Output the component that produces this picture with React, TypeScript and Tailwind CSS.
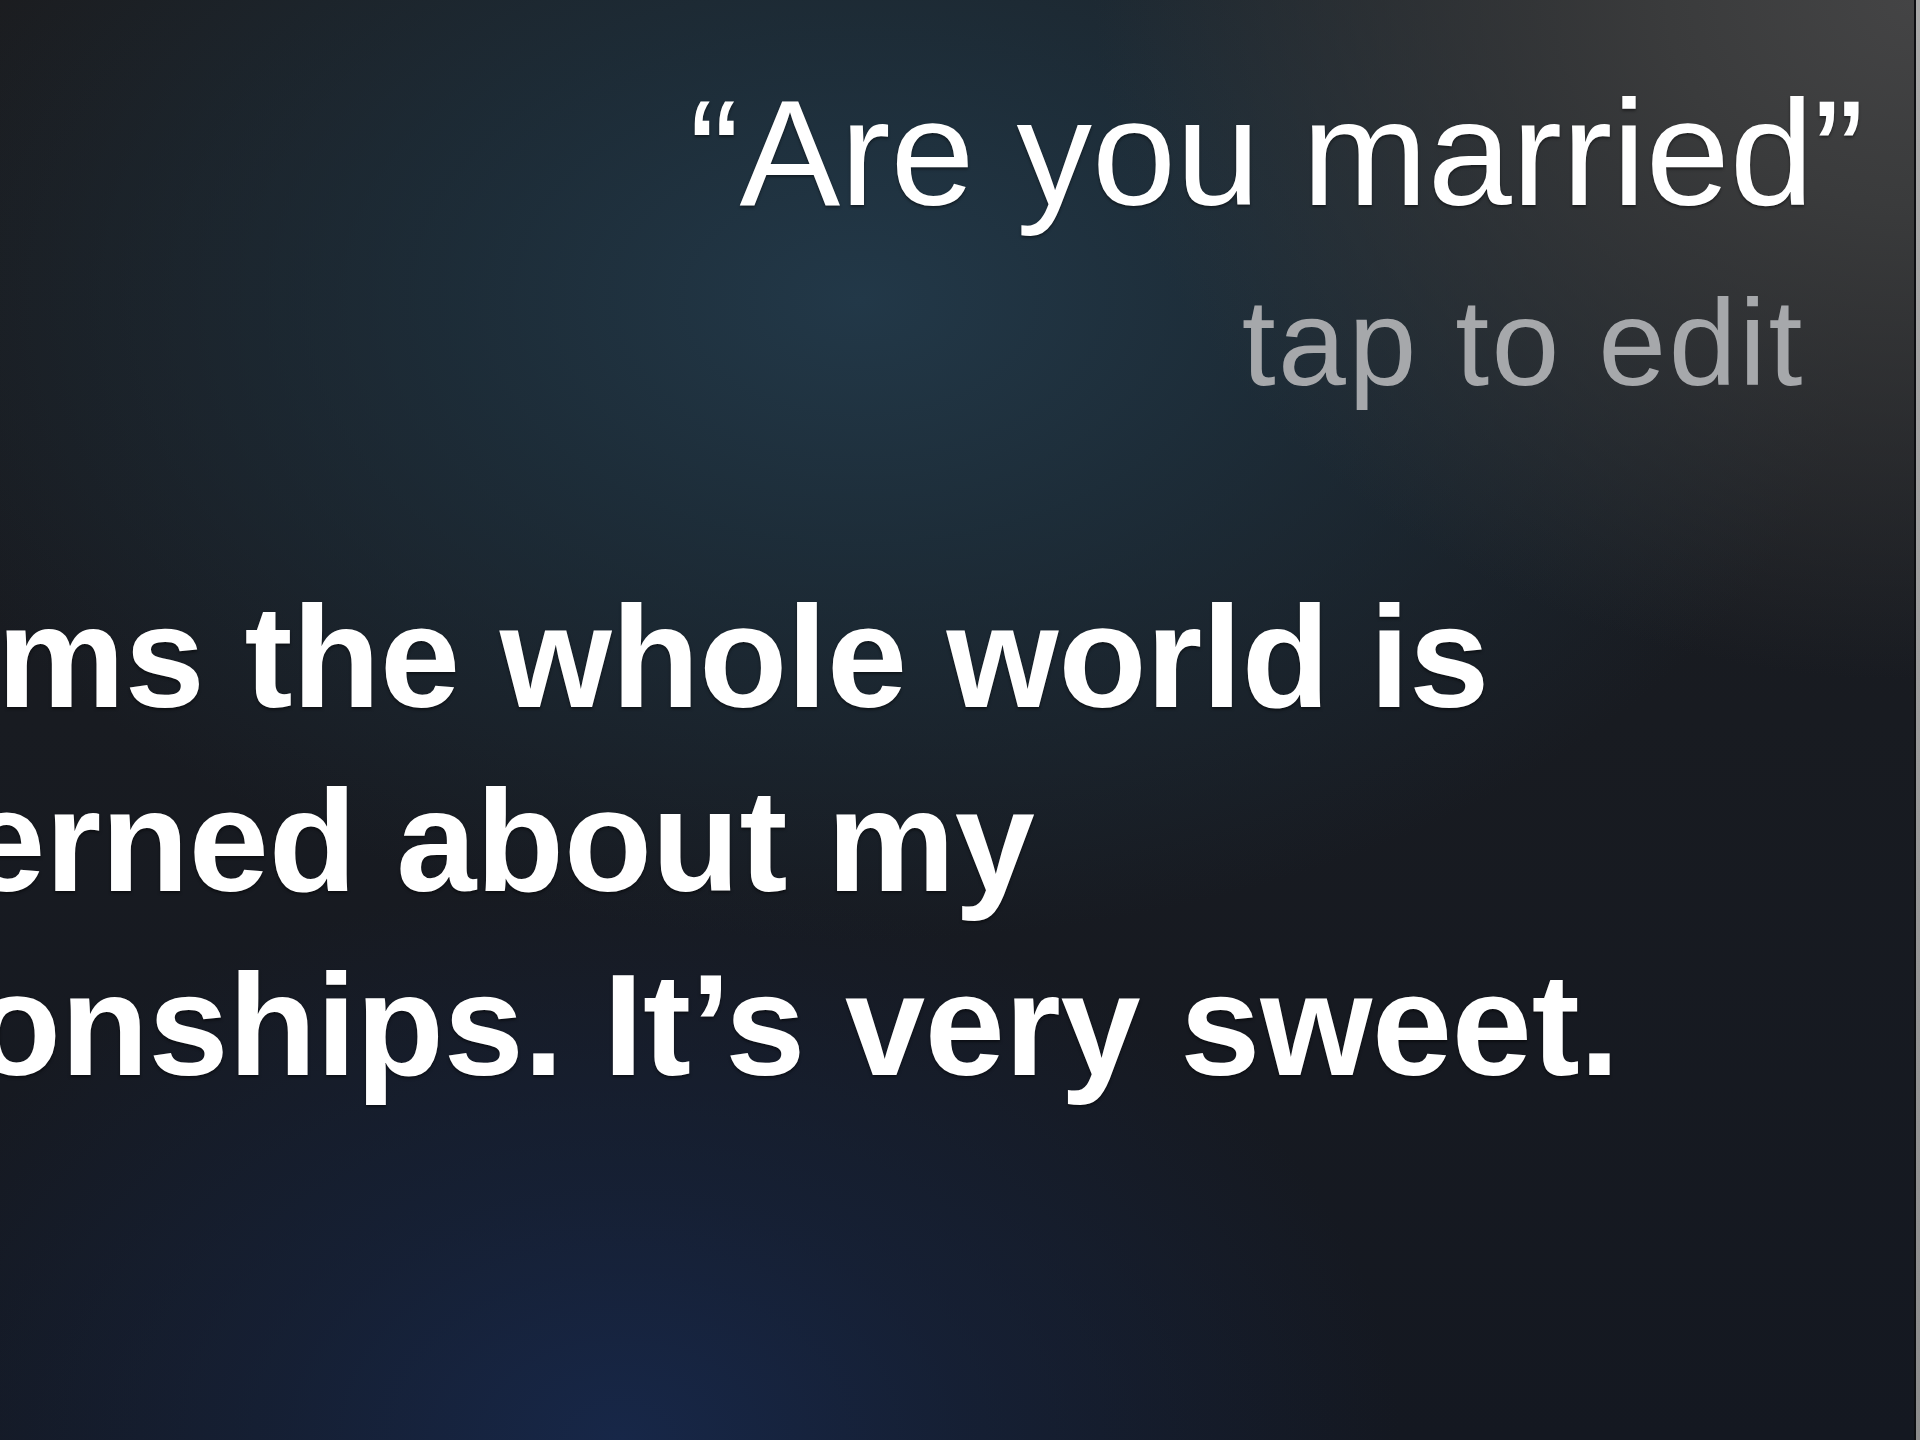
import React from 'react';

const ANSWER_LINES = [
  'It seems the whole world is',
  'concerned about my',
  'relationships. It’s very sweet.',
];

const App: React.FC = () => {
  return (
    <div className="flex w-[1920px] h-[1440px] overflow-hidden bg-[#16191f] font-['Liberation_Sans',Arial,sans-serif] text-white">
      {/* Siri conversation panel */}
      <main className="flex-1 flex flex-col overflow-hidden bg-[radial-gradient(ellipse_820px_680px_at_1914px_0px,#444445_0%,#3a3b3c_30%,rgba(40,42,46,0)_100%),radial-gradient(ellipse_1000px_640px_at_860px_300px,#223848_0%,rgba(30,50,64,0.75)_40%,rgba(22,25,31,0)_100%),radial-gradient(ellipse_780px_560px_at_620px_1440px,#172748_0%,rgba(22,36,64,0.6)_45%,rgba(22,25,31,0)_100%),linear-gradient(180deg,#1b1c1f_0%,#181b21_50%,#141821_100%)]">
        {/* Recognised question */}
        <div className="pt-[77px] pr-[50px] text-right">
          <div className="text-[151px] leading-[151px] whitespace-nowrap [text-shadow:0_2px_3px_rgba(0,0,0,0.45)]">
            “Are you married”
          </div>
        </div>
        <div className="pt-[54px] pr-[109px] text-right">
          <div className="text-[122px] leading-[122px] tracking-[2.5px] text-[#a6a8ab] whitespace-nowrap">
            tap to edit
          </div>
        </div>

        {/* Siri's answer, cut off at the left edge */}
        <div className="pt-[162px] ml-[-370px]">
          {ANSWER_LINES.map((line) => (
            <div
              key={line}
              className="text-[144px] leading-[184px] font-bold tracking-[-0.2px] whitespace-nowrap [text-shadow:0_2px_3px_rgba(0,0,0,0.5)]"
            >
              {line}
            </div>
          ))}
        </div>
      </main>

      {/* Device frame edge */}
      <div className="w-[6px] flex-shrink-0 border-l-2 border-[#0e0f12] bg-[linear-gradient(180deg,#a8a8a8_0%,#9a9a9a_50%,#8c8c8c_100%)]" />
    </div>
  );
};

export default App;
